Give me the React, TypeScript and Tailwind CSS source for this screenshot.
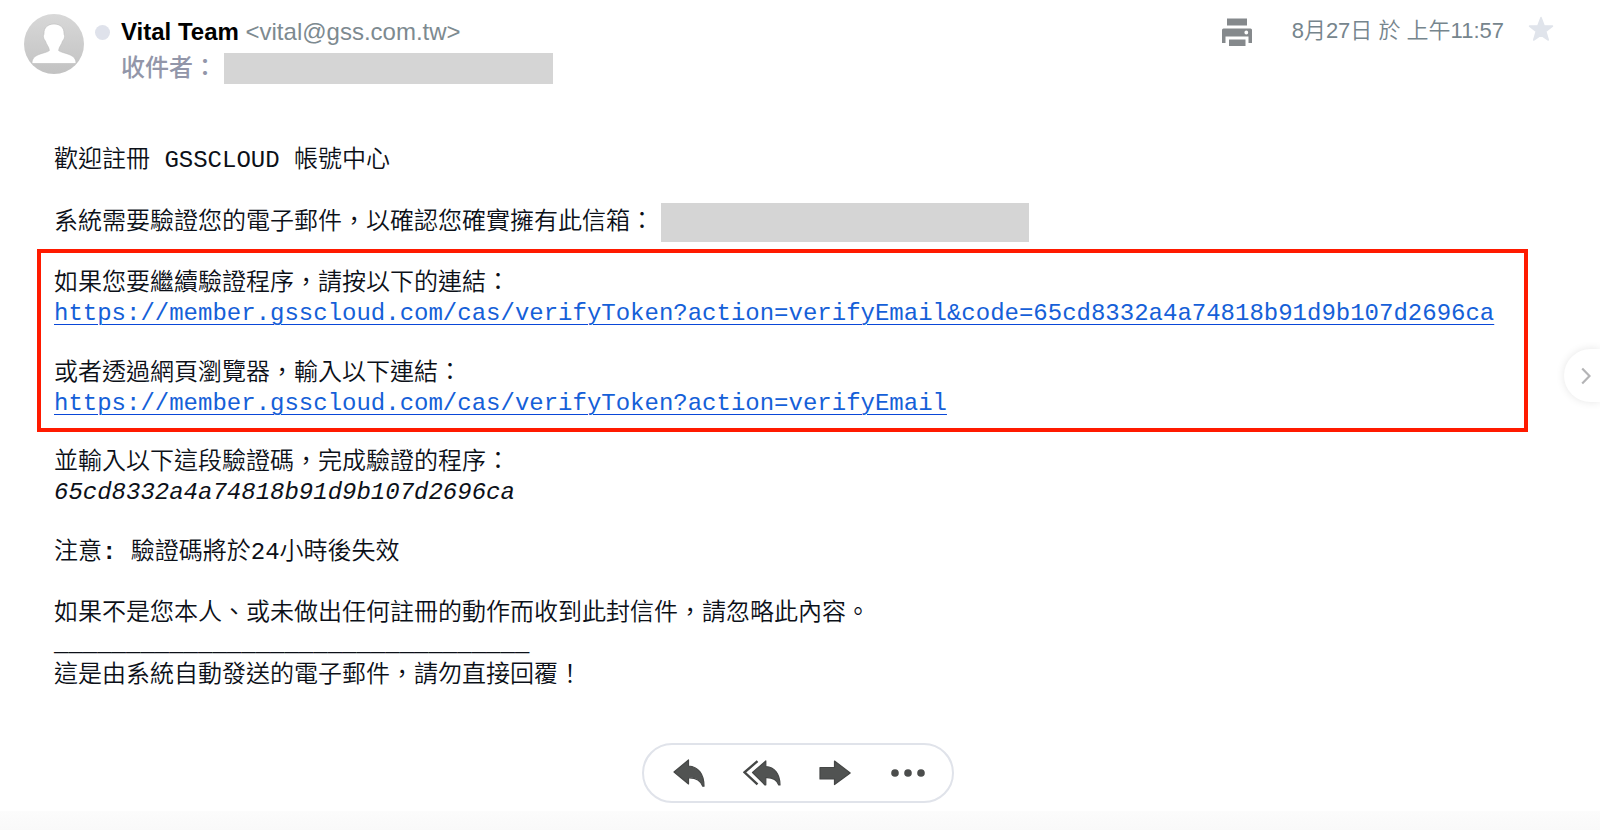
import type { ReactNode } from 'react';

const TOKEN = '65cd8332a4a74818b91d9b107d2696ca';
const VERIFY_URL = 'https://member.gsscloud.com/cas/verifyToken?action=verifyEmail';

function Avatar() {
  return (
    <svg viewBox="0 0 60 60" className="size-[60px] shrink-0" role="img" aria-label="Vital Team">
      <defs>
        <linearGradient id="avatar-shade" x1="0" y1="0" x2="0" y2="1">
          <stop offset="0" stopColor="#d8d8d8" />
          <stop offset="1" stopColor="#c2c2c2" />
        </linearGradient>
      </defs>
      <circle cx="30" cy="30" r="30" fill="url(#avatar-shade)" />
      <path
        d="M30 10c-6 0-10.300 3.600-10 9.500.1 1.200-.7 1.500-.6 3 .2 2.300 1 3.300 2 4.500 1 3.800 3.600 5.500 4 9.500-1.600 1.700-6.500 2.300-10.500 4-4.500 1.900-6.900 4-6.900 9h44c0-5-2.400-7.100-6.900-9-4-1.700-8.900-2.300-10.500-4 .4-4 3-5.700 4-9.500 1-1.200 1.800-2.200 2-4.500.1-1.500-.7-1.800-.6-3C40.300 13.600 36 10 30 10z"
        fill="#fff"
        stroke="#bcbcbc"
        strokeWidth="0.600"
      />
    </svg>
  );
}

function PrintIcon() {
  return (
    <svg viewBox="0 0 30 29" className="h-[29px] w-[30px]" fill="#85898c" aria-hidden="true">
      <path d="M5 0.500h20v7H5z" />
      <path
        fillRule="evenodd"
        d="M1.500 10.500h27Q30 10.500 30 12v13h-3.500v-6.500h-23V25H0V12q0-1.500 1.500-1.500zM24.300 12.600a1.900 1.900 0 1 0 0 3.800 1.900 1.900 0 0 0 0-3.800z"
      />
      <path d="M7 21.500h16.500V28H7z" />
    </svg>
  );
}

function StarIcon() {
  return (
    <svg viewBox="0 0 26 26" className="size-[26px]" aria-hidden="true">
      <path
        d="M13 1.500l3.100 8.300 8.400.3-6.700 5.300 2.500 8.600-7.300-4.800L5.700 24l2.500-8.600L1.500 10.100l8.400-.3z"
        fill="#e0e4eb"
        stroke="#e0e4eb"
        strokeWidth="1.500"
        strokeLinejoin="round"
      />
    </svg>
  );
}

const iconStyle = { fill: '#515352', stroke: '#454746', strokeWidth: 1.2, strokeLinejoin: 'round' } as const;

function ReplyIcon() {
  return (
    <svg viewBox="0 0 32 28" className="h-7 w-8" aria-hidden="true">
      <path {...iconStyle} d="M1 13L15.500 1v6C25 7.500 31 15 31 27.200h-1.200C27.500 21 23 18.500 15.500 18.800V25z" />
    </svg>
  );
}

function ReplyAllIcon() {
  return (
    <svg viewBox="0 0 38 26" className="h-[26px] w-[38px]" aria-hidden="true">
      <path d="M14.500 1.200L1.500 12.300l13 12" fill="none" stroke="#454746" strokeWidth="2.400" />
      <path {...iconStyle} d="M9.500 12.500L22.800 1v5.500C31.500 7 37 14 37 25h-1.200c-2-5.500-6-7.600-13-7.300v7.100L22 25z" />
    </svg>
  );
}

function ForwardIcon() {
  return (
    <svg viewBox="0 0 32 26" className="h-[26px] w-8" aria-hidden="true">
      <path {...iconStyle} d="M1 7.500h14.500V1L31.200 13 15.500 24.500V19H1z" />
    </svg>
  );
}

function MoreIcon() {
  return (
    <svg viewBox="0 0 34 8" className="h-2 w-[34px]" fill="#4b4d4c" aria-hidden="true">
      <circle cx="4" cy="4" r="3.800" />
      <circle cx="17" cy="4" r="3.800" />
      <circle cx="30" cy="4" r="3.800" />
    </svg>
  );
}

function ActionButton({ label, children }: { label: string; children: ReactNode }) {
  return (
    <button type="button" aria-label={label} className="flex h-full w-[73px] items-center justify-center">
      {children}
    </button>
  );
}

function VerifyLink({ href }: { href: string }) {
  return (
    <a
      href={href}
      className="block break-all text-[#1560d8] underline decoration-[#0a48d8] decoration-1 underline-offset-4"
    >
      {href}
    </a>
  );
}

export default function App() {
  return (
    <div
      lang="zh-TW"
      className="relative flex min-h-screen flex-col overflow-hidden bg-white font-['Liberation_Sans','Noto_Sans_CJK_TC',sans-serif] text-[#0c1018]"
    >
      <header className="flex items-start pt-3.5 pr-[46px] pl-6">
        <Avatar />
        <span className="mt-[11px] ml-[11px] size-[15px] shrink-0 rounded-full bg-[#dfe2eb]" />
        <div className="ml-[11px] flex-1 text-2xl leading-9">
          <div>
            <span className="font-bold text-black">Vital Team</span>{' '}
            <span className="text-[#7d8a90]">&lt;vital@gss.com.tw&gt;</span>
          </div>
          <div className="flex items-center text-[#9296a9]">
            <span className="font-medium">收件者：</span>
            <span className="ml-[7px] h-[31px] w-[329px] bg-[#d5d5d5]" />
          </div>
        </div>
        <div className="flex items-center">
          <button type="button" aria-label="列印" className="mt-1">
            <PrintIcon />
          </button>
          <time className="ml-10 text-[22px] leading-8 font-[350] text-[#76858d]">8月27日 於 上午11:57</time>
          <button type="button" aria-label="加上星號" className="-mt-1 ml-6">
            <StarIcon />
          </button>
        </div>
      </header>

      <main className="mt-[60px] flex flex-col pr-[72px] pl-[37px] font-['Liberation_Mono','Noto_Sans_CJK_TC',monospace] text-2xl leading-[30px] font-[350]">
        <p className="pl-[17px]">歡迎註冊 GSSCLOUD 帳號中心</p>
        <p className="mt-[27px] flex items-start pl-[17px] leading-10">
          系統需要驗證您的電子郵件，以確認您確實擁有此信箱：
          <span className="ml-[7px] h-[39px] w-[368px] bg-[#d5d5d5]" />
        </p>

        <section className="mt-1.5 flex flex-col gap-[30px] border-4 border-[#ff1a00] pt-4 pb-[9px] pl-[13px]">
          <div>
            <p>如果您要繼續驗證程序，請按以下的連結：</p>
            <VerifyLink href={`${VERIFY_URL}&code=${TOKEN}`} />
          </div>
          <div>
            <p>或者透過網頁瀏覽器，輸入以下連結：</p>
            <VerifyLink href={VERIFY_URL} />
          </div>
        </section>

        <div className="mt-4 pl-[17px]">
          <p>並輸入以下這段驗證碼，完成驗證的程序：</p>
          <p className="italic">{TOKEN}</p>
          <p className="mt-[30px]">
            注意<span className="font-bold">:</span> 驗證碼將於24小時後失效
          </p>
          <p className="mt-[31px]">如果不是您本人、或未做出任何註冊的動作而收到此封信件，請忽略此內容。</p>
          <p className="leading-8">_________________________________</p>
          <p>這是由系統自動發送的電子郵件，請勿直接回覆！</p>
        </div>
      </main>

      <div
        role="toolbar"
        aria-label="郵件動作"
        className="mt-13 mr-1 flex h-[60px] items-center self-center rounded-full border-2 border-[#e0e3ea] px-2"
      >
        <ActionButton label="回覆">
          <ReplyIcon />
        </ActionButton>
        <ActionButton label="全部回覆">
          <ReplyAllIcon />
        </ActionButton>
        <ActionButton label="轉寄">
          <ForwardIcon />
        </ActionButton>
        <ActionButton label="更多">
          <MoreIcon />
        </ActionButton>
      </div>
      <div className="mt-2 min-h-4 flex-1 bg-linear-to-b from-[#fcfcfc] to-[#f9f9f9]" />

      <button
        type="button"
        aria-label="下一封"
        className="absolute top-[349px] right-0 flex h-[53px] w-9 items-center justify-center rounded-l-full bg-white pl-2 shadow-[0_0_8px_rgba(0,0,0,0.100)]"
      >
        <svg viewBox="0 0 10 18" className="h-[18px] w-2.5" fill="none" stroke="#b4b4b6" strokeWidth="2.200" aria-hidden="true">
          <path d="M1.200 1.500L8.500 9l-7.300 7.500" />
        </svg>
      </button>
    </div>
  );
}
